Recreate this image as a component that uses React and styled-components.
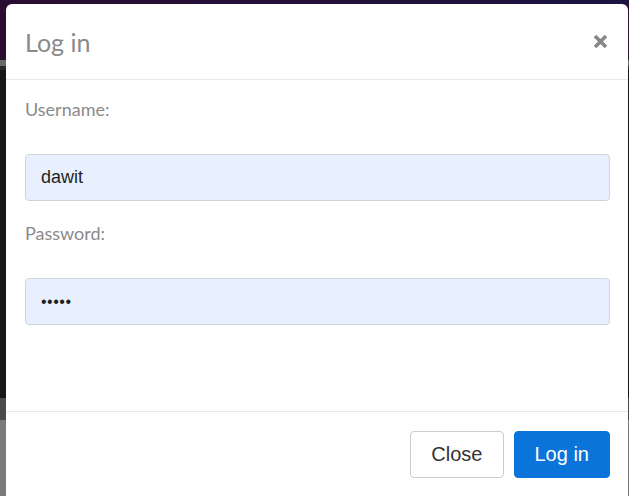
import React from 'react';
import styled, { createGlobalStyle } from 'styled-components';

const GlobalStyle = createGlobalStyle`
  html, body {
    margin: 0;
    padding: 0;
    background: #151515;
    overflow: hidden;
  }
`;

// Dimmed page peeking out around the dialog
const Backdrop = styled.div`
  width: 629px;
  height: 496px;
  box-sizing: border-box;
  padding: 4px 1px 0 6px;
  background:
    linear-gradient(to right, #2a0d30 0%, #24103a 50%, #1b1540 100%) top / 100% 4px no-repeat,
    linear-gradient(to bottom,
      #2a0d30 0 60px,
      #6a6a6a 60px 66px,
      #2a2a2a 66px 70px,
      #161616 70px 398px,
      #4a4a4a 398px 420px,
      #7a7a7a 420px 496px);
`;

const Modal = styled.div`
  height: 100%;
  background: #fff;
  border-radius: 6px 6px 0 0;
  display: flex;
  flex-direction: column;
  font-family: Lato, "Liberation Sans", sans-serif;
`;

const Header = styled.div`
  height: 75px;
  flex-shrink: 0;
  display: flex;
  align-items: center;
  justify-content: space-between;
  padding: 0 20px 0 19px;
  border-bottom: 1px solid #e9e9e9;
`;

const Title = styled.h4`
  margin: 0;
  font-size: 25px;
  font-weight: 400;
  color: #8a8a8a;
`;

const CloseX = styled.button`
  border: 0;
  background: none;
  padding: 0;
  width: 15px;
  height: 15px;
  display: flex;
  cursor: pointer;
`;

const Body = styled.div`
  flex: 1;
  padding: 17px 18px 0 19px;
`;

const Group = styled.div`
  display: flex;
  flex-direction: column;
  margin-bottom: 20px;
`;

const Label = styled.label`
  font-size: 18px;
  line-height: 25px;
  color: #8a8a8a;
  margin-bottom: 32px;
`;

const Input = styled.input`
  height: 47px;
  box-sizing: border-box;
  border: 1px solid #cfd4da;
  border-radius: 4px;
  background: #e8f0fe;
  padding: 0 15px;
  font-family: "Liberation Sans", Arial, sans-serif;
  font-size: ${p => (p.type === 'password' ? '16px' : '18px')};
  letter-spacing: ${p => (p.type === 'password' ? '0.5px' : '0')};
  color: #1f1f1f;
  outline: none;
`;

const Footer = styled.div`
  flex-shrink: 0;
  height: 85px;
  box-sizing: border-box;
  border-top: 1px solid #e9e9e9;
  display: flex;
  justify-content: flex-end;
  align-items: flex-start;
  gap: 10px;
  padding: 19px 18px 0 0;
`;

const Button = styled.button`
  height: 47px;
  padding: 0 20px;
  border-radius: 4px;
  font-family: "Liberation Sans", Arial, sans-serif;
  font-size: 20px;
  cursor: pointer;
  border: 1px solid ${p => (p.primary ? '#0a74da' : '#cccccc')};
  background: ${p => (p.primary ? '#0a74da' : '#ffffff')};
  color: ${p => (p.primary ? '#ffffff' : '#333333')};
`;

export default function App() {
  return (
    <>
      <GlobalStyle />
      <Backdrop>
        <Modal>
          <Header>
            <Title>Log in</Title>
            <CloseX aria-label="Close">
              <svg width="15" height="15" viewBox="0 0 15 15">
                <path d="M2 2 L13 13 M13 2 L2 13" stroke="#888" strokeWidth="3.6" strokeLinecap="butt" />
              </svg>
            </CloseX>
          </Header>
          <Body>
            <Group>
              <Label>Username:</Label>
              <Input type="text" defaultValue="dawit" />
            </Group>
            <Group>
              <Label>Password:</Label>
              <Input type="password" defaultValue="12345" />
            </Group>
          </Body>
          <Footer>
            <Button>Close</Button>
            <Button primary>Log in</Button>
          </Footer>
        </Modal>
      </Backdrop>
    </>
  );
}
